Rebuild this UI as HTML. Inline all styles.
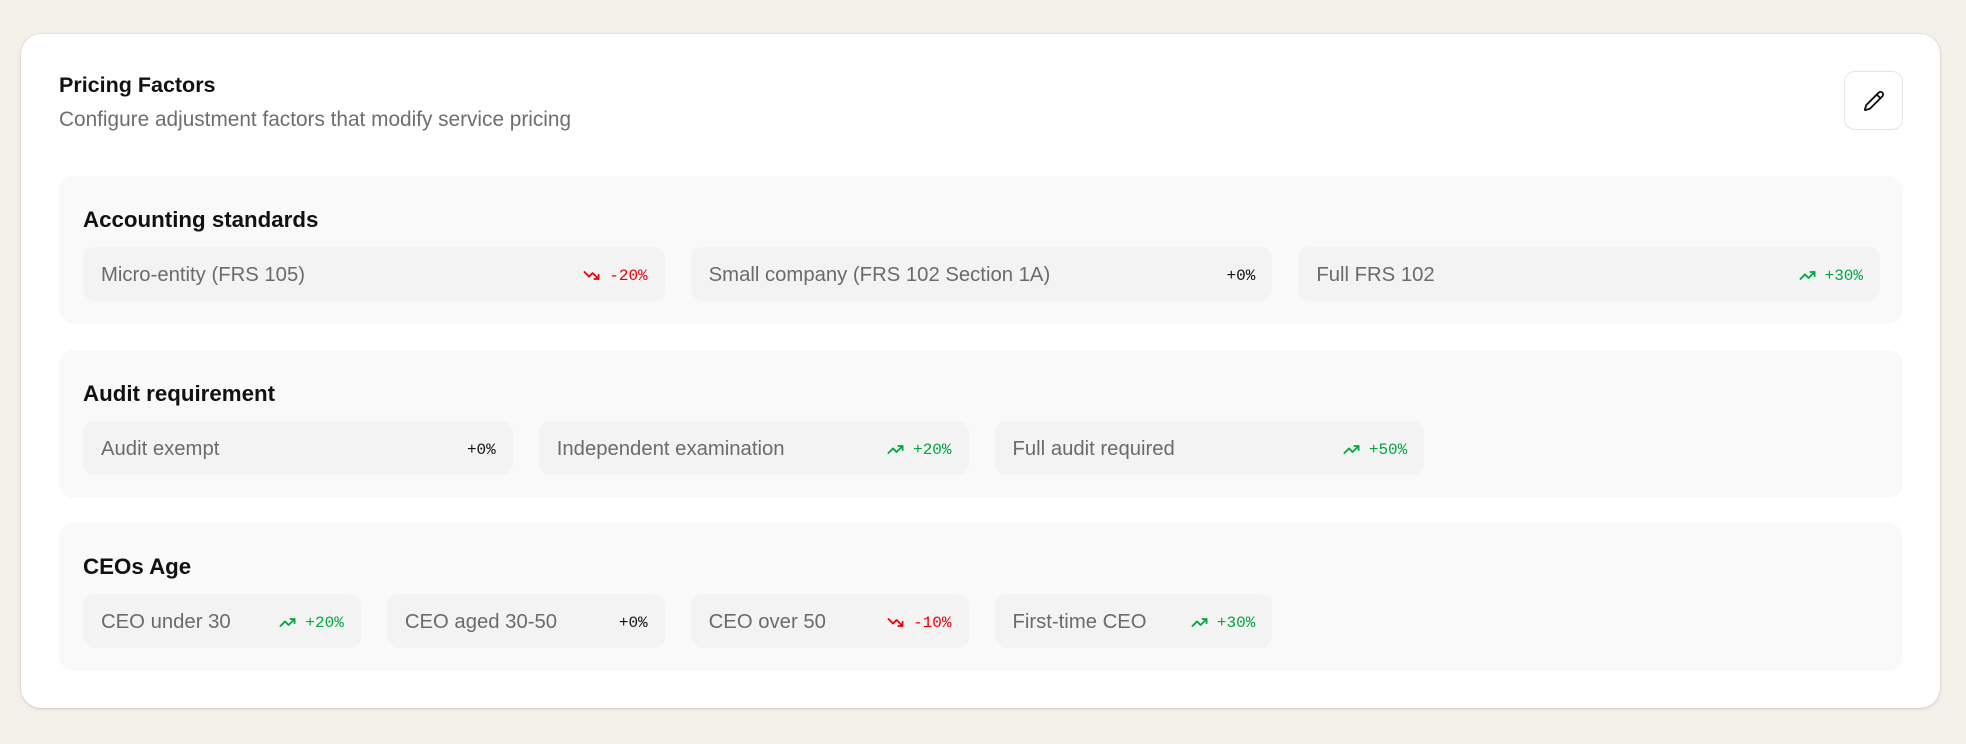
<!DOCTYPE html>
<html><head><meta charset="utf-8"><style>
*{box-sizing:border-box;margin:0;padding:0}
body{width:1966px;height:744px;background:#f3efe9;font-family:"Liberation Sans","DejaVu Sans",sans-serif;position:relative;overflow:hidden}
.card{position:absolute;left:21px;top:34px;width:1919px;height:674px;background:#fff;border-radius:20px;box-shadow:0 1px 3px rgba(0,0,0,.12),0 0 0 1px rgba(0,0,0,.04)}
.title{position:absolute;left:38px;top:39px;font-size:21.5px;font-weight:bold;color:#111}
.sub{position:absolute;left:38px;top:74px;font-size:20.8px;color:#6e6e6e}
.edit{position:absolute;left:1823px;top:37px;width:59px;height:59px;border:1px solid #e4e4e4;border-radius:11px;display:flex;align-items:center;justify-content:center}
.sec{position:absolute;left:38px;width:1844px;height:148px;background:#f9f9f9;border-radius:15px;padding:0 24px}
.sec h3{position:absolute;left:24px;top:31px;font-size:22.3px;font-weight:bold;color:#111}
.grid{position:absolute;left:24px;right:23px;top:71px;display:grid;gap:26px}
.chip{height:54px;background:#f3f3f3;border-radius:12px;display:flex;align-items:center;justify-content:space-between;padding:3px 17px 0 18px}
.chip .l{font-size:20.3px;color:#6b6b6b}
.chip .r{font-family:"Liberation Mono","DejaVu Sans Mono",monospace;font-size:16px;display:flex;align-items:center;gap:9px}
.up{color:#00a63e}.dn{color:#e7000b}.z{color:#111}
</style></head><body>
<div class="card">
<div class="title">Pricing Factors</div>
<div class="sub">Configure adjustment factors that modify service pricing</div>
<div class="edit"><svg width="22" height="22" viewBox="0 0 24 24" fill="none" stroke="#111" stroke-width="2" stroke-linecap="round" stroke-linejoin="round"><path d="M21.17 6.81a2.83 2.83 0 0 0-4-4L3.84 16.17a2 2 0 0 0-.5.83l-1.32 4.35a.5.5 0 0 0 .62.62l4.35-1.32a2 2 0 0 0 .83-.5z"/><path d="m15 5 4 4"/></svg></div>

<div class="sec" style="top:142px"><h3>Accounting standards</h3>
<div class="grid" style="grid-template-columns:repeat(3,1fr)">
<div class="chip"><span class="l">Micro-entity (FRS 105)</span><span class="r dn"><svg width="17" height="17" viewBox="0 0 24 24" fill="none" stroke="currentColor" stroke-width="2.5" stroke-linecap="round" stroke-linejoin="round"><path d="m22 17-8.5-8.5-5 5L2 7"/><path d="M16 17h6v-6"/></svg>-20%</span></div>
<div class="chip"><span class="l">Small company (FRS 102 Section 1A)</span><span class="r z">+0%</span></div>
<div class="chip"><span class="l">Full FRS 102</span><span class="r up"><svg width="17" height="17" viewBox="0 0 24 24" fill="none" stroke="currentColor" stroke-width="2.5" stroke-linecap="round" stroke-linejoin="round"><path d="m22 7-8.5 8.5-5-5L2 17"/><path d="M16 7h6v6"/></svg>+30%</span></div>
</div></div>

<div class="sec" style="top:316px"><h3>Audit requirement</h3>
<div class="grid" style="grid-template-columns:repeat(4,1fr)">
<div class="chip"><span class="l">Audit exempt</span><span class="r z">+0%</span></div>
<div class="chip"><span class="l">Independent examination</span><span class="r up"><svg width="17" height="17" viewBox="0 0 24 24" fill="none" stroke="currentColor" stroke-width="2.5" stroke-linecap="round" stroke-linejoin="round"><path d="m22 7-8.5 8.5-5-5L2 17"/><path d="M16 7h6v6"/></svg>+20%</span></div>
<div class="chip"><span class="l">Full audit required</span><span class="r up"><svg width="17" height="17" viewBox="0 0 24 24" fill="none" stroke="currentColor" stroke-width="2.5" stroke-linecap="round" stroke-linejoin="round"><path d="m22 7-8.5 8.5-5-5L2 17"/><path d="M16 7h6v6"/></svg>+50%</span></div>
</div></div>

<div class="sec" style="top:489px"><h3>CEOs Age</h3>
<div class="grid" style="grid-template-columns:repeat(6,1fr)">
<div class="chip"><span class="l">CEO under 30</span><span class="r up"><svg width="17" height="17" viewBox="0 0 24 24" fill="none" stroke="currentColor" stroke-width="2.5" stroke-linecap="round" stroke-linejoin="round"><path d="m22 7-8.5 8.5-5-5L2 17"/><path d="M16 7h6v6"/></svg>+20%</span></div>
<div class="chip"><span class="l">CEO aged 30-50</span><span class="r z">+0%</span></div>
<div class="chip"><span class="l">CEO over 50</span><span class="r dn"><svg width="17" height="17" viewBox="0 0 24 24" fill="none" stroke="currentColor" stroke-width="2.5" stroke-linecap="round" stroke-linejoin="round"><path d="m22 17-8.5-8.5-5 5L2 7"/><path d="M16 17h6v-6"/></svg>-10%</span></div>
<div class="chip"><span class="l">First-time CEO</span><span class="r up"><svg width="17" height="17" viewBox="0 0 24 24" fill="none" stroke="currentColor" stroke-width="2.5" stroke-linecap="round" stroke-linejoin="round"><path d="m22 7-8.5 8.5-5-5L2 17"/><path d="M16 7h6v6"/></svg>+30%</span></div>
</div></div>
</div>
</body></html>
